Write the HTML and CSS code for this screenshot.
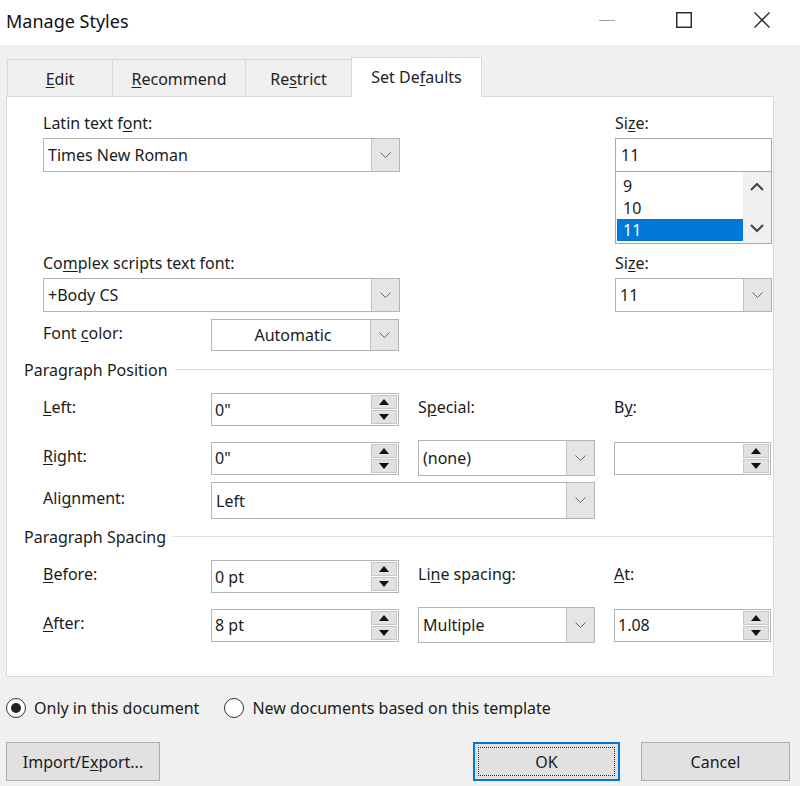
FILE: index.html
```html
<!DOCTYPE html>
<html lang="en">
<head>
    <meta charset="UTF-8">
    <title>Manage Styles</title>
    <link rel="stylesheet" href="styles.css">
</head>
<body>
    <div class="titlebar">
        <div class="title">Manage Styles</div>
        <div class="caption-buttons">
            <span class="cap cap-min"><svg width="16" height="16" viewBox="0 0 16 16"><line x1="0" y1="8.5" x2="16" y2="8.5" stroke="#a0a0a0" stroke-width="1"/></svg></span>
            <span class="cap cap-max"><svg width="16" height="16" viewBox="0 0 16 16"><rect x="0.75" y="0.75" width="14.5" height="14.5" fill="none" stroke="#222" stroke-width="1.4"/></svg></span>
            <span class="cap cap-close"><svg width="16" height="16" viewBox="0 0 16 16"><path d="M0.5 0.5 L15.5 15.5 M15.5 0.5 L0.5 15.5" stroke="#222" stroke-width="1.3"/></svg></span>
        </div>
    </div>

    <div class="dialog">
        <div class="tabs">
            <div class="tab tab-edit"><u>E</u>dit</div>
            <div class="tab tab-recommend"><u>R</u>ecommend</div>
            <div class="tab tab-restrict">Re<u>s</u>trict</div>
            <div class="tab tab-defaults active">Set De<u>f</u>aults</div>
        </div>

        <div class="panel">
            <div class="font-grid">
                <div class="label">Latin text f<u>o</u>nt:</div>
                <div class="label">Si<u>z</u>e:</div>

                <div class="combo">
                    <span class="combo-value">Times New Roman</span>
                    <span class="combo-btn"><svg width="11" height="7" viewBox="0 0 11 7"><polyline points="0.5,0.5 5.5,5.5 10.5,0.5" fill="none" stroke="#666" stroke-width="1"/></svg></span>
                </div>
                <div class="size-box">
                    <div class="textbox">11</div>
                    <div class="listbox">
                        <div class="list-items">
                            <div class="list-item">9</div>
                            <div class="list-item">10</div>
                            <div class="list-item selected">11</div>
                        </div>
                        <div class="list-scroll">
                            <svg width="14" height="9" viewBox="0 0 14 9"><polyline points="1,8 7,2 13,8" fill="none" stroke="#444" stroke-width="2"/></svg>
                            <svg width="14" height="9" viewBox="0 0 14 9"><polyline points="1,1 7,7 13,1" fill="none" stroke="#444" stroke-width="2"/></svg>
                        </div>
                    </div>
                </div>

                <div class="label label-gap">Co<u>m</u>plex scripts text font:</div>
                <div class="label label-gap">Si<u>z</u>e:</div>

                <div class="combo">
                    <span class="combo-value">+Body CS</span>
                    <span class="combo-btn"><svg width="11" height="7" viewBox="0 0 11 7"><polyline points="0.5,0.5 5.5,5.5 10.5,0.5" fill="none" stroke="#666" stroke-width="1"/></svg></span>
                </div>
                <div class="combo">
                    <span class="combo-value">11</span>
                    <span class="combo-btn"><svg width="11" height="7" viewBox="0 0 11 7"><polyline points="0.5,0.5 5.5,5.5 10.5,0.5" fill="none" stroke="#666" stroke-width="1"/></svg></span>
                </div>
            </div>

            <div class="field-row color-row">
                <div class="label field-label">Font <u>c</u>olor:</div>
                <div class="combo combo-color">
                    <span class="combo-value centered">Automatic</span>
                    <span class="combo-btn"><svg width="11" height="7" viewBox="0 0 11 7"><polyline points="0.5,0.5 5.5,5.5 10.5,0.5" fill="none" stroke="#666" stroke-width="1"/></svg></span>
                </div>
            </div>

            <div class="group-heading heading-position"><span>Paragraph Position</span></div>

            <div class="field-row first-row">
                <div class="label field-label"><u>L</u>eft:</div>
                <div class="spin col-2">
                    <span class="spin-value">0"</span>
                    <span class="spin-btns">
                        <span class="spin-btn"><svg width="10" height="6" viewBox="0 0 10 6"><polygon points="0,6 5,0 10,6" fill="#111"/></svg></span>
                        <span class="spin-btn"><svg width="10" height="6" viewBox="0 0 10 6"><polygon points="0,0 5,6 10,0" fill="#111"/></svg></span>
                    </span>
                </div>
                <div class="label col-3">S<u>p</u>ecial:</div>
                <div class="label col-4">B<u>y</u>:</div>
            </div>

            <div class="field-row next-row">
                <div class="label field-label"><u>R</u>ight:</div>
                <div class="spin col-2">
                    <span class="spin-value">0"</span>
                    <span class="spin-btns">
                        <span class="spin-btn"><svg width="10" height="6" viewBox="0 0 10 6"><polygon points="0,6 5,0 10,6" fill="#111"/></svg></span>
                        <span class="spin-btn"><svg width="10" height="6" viewBox="0 0 10 6"><polygon points="0,0 5,6 10,0" fill="#111"/></svg></span>
                    </span>
                </div>
                <div class="combo combo-tall col-3">
                    <span class="combo-value">(none)</span>
                    <span class="combo-btn"><svg width="11" height="7" viewBox="0 0 11 7"><polyline points="0.5,0.5 5.5,5.5 10.5,0.5" fill="none" stroke="#666" stroke-width="1"/></svg></span>
                </div>
                <div class="spin col-4">
                    <span class="spin-value"></span>
                    <span class="spin-btns">
                        <span class="spin-btn"><svg width="10" height="6" viewBox="0 0 10 6"><polygon points="0,6 5,0 10,6" fill="#111"/></svg></span>
                        <span class="spin-btn"><svg width="10" height="6" viewBox="0 0 10 6"><polygon points="0,0 5,6 10,0" fill="#111"/></svg></span>
                    </span>
                </div>
            </div>

            <div class="field-row align-row">
                <div class="label field-label">Ali<u>g</u>nment:</div>
                <div class="combo combo-align">
                    <span class="combo-value">Left</span>
                    <span class="combo-btn"><svg width="11" height="7" viewBox="0 0 11 7"><polyline points="0.5,0.5 5.5,5.5 10.5,0.5" fill="none" stroke="#666" stroke-width="1"/></svg></span>
                </div>
            </div>

            <div class="group-heading heading-spacing"><span>Paragraph Spacing</span></div>

            <div class="field-row first-row">
                <div class="label field-label"><u>B</u>efore:</div>
                <div class="spin col-2">
                    <span class="spin-value">0 pt</span>
                    <span class="spin-btns">
                        <span class="spin-btn"><svg width="10" height="6" viewBox="0 0 10 6"><polygon points="0,6 5,0 10,6" fill="#111"/></svg></span>
                        <span class="spin-btn"><svg width="10" height="6" viewBox="0 0 10 6"><polygon points="0,0 5,6 10,0" fill="#111"/></svg></span>
                    </span>
                </div>
                <div class="label col-3">Li<u>n</u>e spacing:</div>
                <div class="label col-4"><u>A</u>t:</div>
            </div>

            <div class="field-row next-row">
                <div class="label field-label"><u>A</u>fter:</div>
                <div class="spin col-2">
                    <span class="spin-value">8 pt</span>
                    <span class="spin-btns">
                        <span class="spin-btn"><svg width="10" height="6" viewBox="0 0 10 6"><polygon points="0,6 5,0 10,6" fill="#111"/></svg></span>
                        <span class="spin-btn"><svg width="10" height="6" viewBox="0 0 10 6"><polygon points="0,0 5,6 10,0" fill="#111"/></svg></span>
                    </span>
                </div>
                <div class="combo combo-tall col-3">
                    <span class="combo-value">Multiple</span>
                    <span class="combo-btn"><svg width="11" height="7" viewBox="0 0 11 7"><polyline points="0.5,0.5 5.5,5.5 10.5,0.5" fill="none" stroke="#666" stroke-width="1"/></svg></span>
                </div>
                <div class="spin col-4">
                    <span class="spin-value">1.08</span>
                    <span class="spin-btns">
                        <span class="spin-btn"><svg width="10" height="6" viewBox="0 0 10 6"><polygon points="0,6 5,0 10,6" fill="#111"/></svg></span>
                        <span class="spin-btn"><svg width="10" height="6" viewBox="0 0 10 6"><polygon points="0,0 5,6 10,0" fill="#111"/></svg></span>
                    </span>
                </div>
            </div>
        </div>

        <div class="scope">
            <label class="radio"><span class="radio-dot checked"></span>Only in this document</label>
            <label class="radio"><span class="radio-dot"></span>New documents based on this template</label>
        </div>

        <div class="buttons">
            <div class="button btn-import">Import/E<u>x</u>port...</div>
            <div class="button-spacer"></div>
            <div class="button btn-ok"><span class="focus-ring">OK</span></div>
            <div class="button btn-cancel">Cancel</div>
        </div>
    </div>
</body>
</html>
```

FILE: styles.css
```css
* {
    margin: 0;
    padding: 0;
    box-sizing: border-box;
    font-family: "Segoe UI", "Noto Sans", "Open Sans", sans-serif;
}

body {
    width: 800px;
    height: 786px;
    background-color: #f0f0f0;
    color: #1b1b1b;
    font-size: 16px;
    overflow: hidden;
}

u {
    text-decoration-thickness: 1px;
    text-underline-offset: 2px;
}

/* title bar */
.titlebar {
    height: 45px;
    background-color: #fff;
    display: flex;
    align-items: center;
    justify-content: space-between;
}

.title {
    font-size: 18px;
    padding-left: 6px;
    color: #111;
    margin-top: -4px;
}

.caption-buttons {
    display: flex;
    align-items: center;
    margin-top: -6px;
}

.cap {
    display: flex;
    width: 16px;
    height: 16px;
}

.cap-min { margin-right: 61px; }
.cap-max { margin-right: 62px; }
.cap-close { margin-right: 30px; }

/* tabs */
.dialog {
    padding-left: 6px;
}

.tabs {
    display: flex;
    align-items: flex-end;
    height: 51px;
    padding-left: 1px;
}

.tab {
    height: 37px;
    display: flex;
    align-items: center;
    justify-content: center;
    border: 1px solid #d9d9d9;
    border-bottom: none;
    margin-right: -1px;
    background-color: #f0f0f0;
    color: #222;
    padding-top: 1px;
}

.tab-edit { width: 106px; }
.tab-recommend { width: 134px; }
.tab-restrict { width: 107px; }

.tab.active {
    width: 131px;
    height: 40px;
    background-color: #fff;
    position: relative;
    top: 1px;
    z-index: 1;
    padding-bottom: 2px;
}

/* main panel */
.panel {
    width: 768px;
    height: 581px;
    background-color: #fff;
    border: 1px solid #d9d9d9;
    padding: 16px 0 0 36px;
}

.label {
    height: 20px;
    line-height: 20px;
    white-space: nowrap;
}

.font-grid {
    display: grid;
    grid-template-columns: 357px 157px;
    column-gap: 215px;
}

.font-grid > .label {
    margin-bottom: 5px;
}

.font-grid > .label-gap {
    margin-top: 9px;
}

.combo {
    height: 34px;
    border: 1px solid #b4b4b4;
    background-color: #fff;
    display: flex;
    align-items: stretch;
}

.combo-value {
    flex: 1;
    display: flex;
    align-items: center;
    padding-left: 4px;
    white-space: nowrap;
}

.combo-value.centered {
    justify-content: center;
}

.combo-btn {
    width: 28px;
    background-color: #e5e5e5;
    border-left: 1px solid #c4c4c4;
    display: flex;
    align-items: center;
    justify-content: center;
}

.size-box {
    display: flex;
    flex-direction: column;
    height: 106px;
}

.textbox {
    height: 34px;
    border: 1px solid #a8a8a8;
    display: flex;
    align-items: center;
    padding-left: 5px;
}

.listbox {
    height: 73px;
    margin-top: -1px;
    border: 1px solid #a8a8a8;
    display: flex;
}

.list-items {
    flex: 1;
    padding: 3px 0 0 1px;
}

.list-item {
    height: 22px;
    line-height: 22px;
    padding-left: 6px;
}

.list-item.selected {
    background-color: #0078d7;
    color: #fff;
}

.list-scroll {
    width: 28px;
    background-color: #f0f0f0;
    display: flex;
    flex-direction: column;
    align-items: center;
    justify-content: space-between;
    padding: 10px 0;
}

/* field rows */
.field-row {
    display: flex;
    align-items: center;
    column-gap: 19px;
}

.field-row > .label {
    margin-bottom: 5px;
}

.field-label { width: 149px; }
.col-2 { width: 188px; }
.col-3 { width: 177px; }
.col-4 { width: 157px; }

.color-row { margin-top: 7px; }

.combo-color {
    width: 188px;
    height: 32px;
}

.first-row { margin-top: 13px; }
.next-row { margin-top: 14px; }
.align-row { margin-top: 6px; }

.combo-tall { height: 36px; }

.combo-align {
    width: 384px;
    height: 37px;
}

/* group headings */
.group-heading {
    display: flex;
    align-items: center;
    margin-left: -19px;
    height: 20px;
}

.group-heading span {
    white-space: nowrap;
    padding-right: 7px;
}

.group-heading::after {
    content: "";
    flex: 1;
    height: 1px;
    background-color: #dcdcdc;
    margin-top: -2px;
}

.heading-position { margin-top: 9px; }
.heading-spacing { margin-top: 8px; }

/* spin boxes */
.spin {
    height: 33px;
    border: 1px solid #b4b4b4;
    display: flex;
    align-items: stretch;
    background-color: #fff;
}

.spin-value {
    flex: 1;
    display: flex;
    align-items: center;
    padding-left: 3px;
}

.spin-btns {
    width: 27px;
    display: flex;
    flex-direction: column;
    padding: 1px 1px 1px 0;
    gap: 1px;
}

.spin-btn {
    flex: 1;
    background-color: #e1e1e1;
    border: 1px solid #c6c6c6;
    display: flex;
    align-items: center;
    justify-content: center;
}

/* scope radios */
.scope {
    display: flex;
    align-items: center;
    margin-top: 21px;
    height: 20px;
}

.radio {
    display: flex;
    align-items: center;
    white-space: nowrap;
}

.radio + .radio {
    margin-left: 25px;
}

.radio-dot {
    width: 20px;
    height: 20px;
    border-radius: 50%;
    border: 1.5px solid #333;
    margin-right: 8px;
    display: flex;
    align-items: center;
    justify-content: center;
    background-color: #fff;
}

.radio-dot.checked::after {
    content: "";
    width: 10px;
    height: 10px;
    border-radius: 50%;
    background-color: #222;
}

/* bottom buttons */
.buttons {
    display: flex;
    margin-top: 24px;
    padding-right: 10px;
}

.button {
    height: 39px;
    background-color: #e1e1e1;
    border: 1px solid #adadad;
    display: flex;
    align-items: center;
    justify-content: center;
}

.btn-import { width: 154px; }
.button-spacer { flex: 1; }

.btn-ok {
    width: 147px;
    border: 2px solid #0078d7;
    padding: 3px;
}

.focus-ring {
    width: 100%;
    height: 100%;
    border: 1px dotted #333;
    display: flex;
    align-items: center;
    justify-content: center;
}

.btn-cancel {
    width: 149px;
    margin-left: 21px;
}
```
